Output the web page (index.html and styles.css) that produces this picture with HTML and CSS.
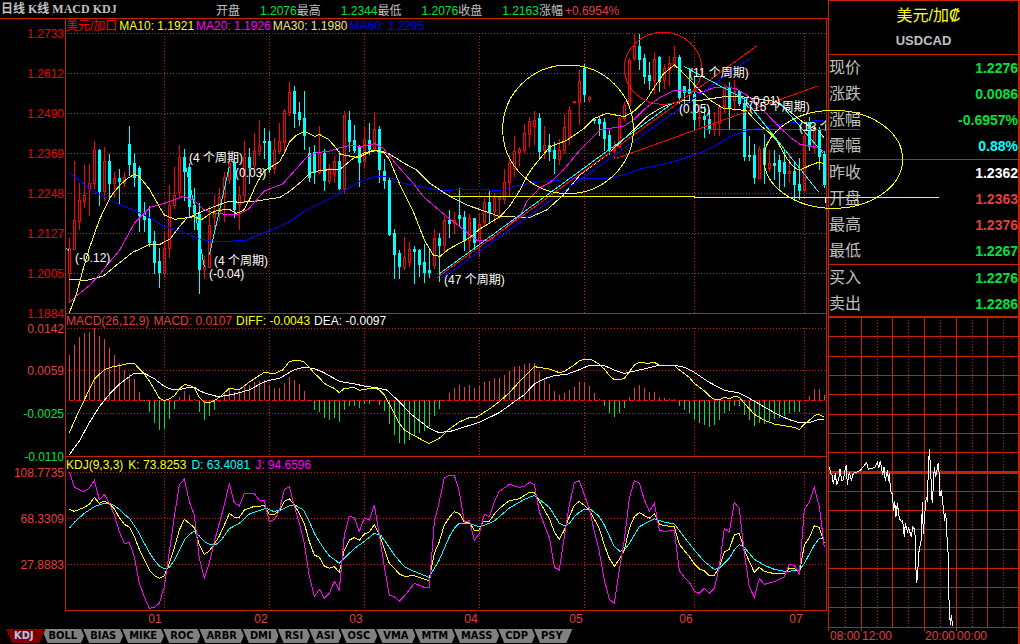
FILE: index.html
```html
<!DOCTYPE html>
<html lang="zh-CN">
<head>
<meta charset="utf-8">
<title>USDCAD 日线</title>
<link rel="stylesheet" href="styles.css">
</head>
<body>
<div class="terminal">
  <main class="main">
    <header class="topbar">
      <h1 class="title">日线 K线 MACD KDJ</h1>
      <dl class="ohlc">
        <div><dt>开盘</dt><dd>1.2076</dd></div>
        <div><dt>最高</dt><dd>1.2344</dd></div>
        <div><dt>最低</dt><dd>1.2076</dd></div>
        <div><dt>收盘</dt><dd>1.2163</dd></div>
        <div class="change"><dt>涨幅</dt><dd>+0.6954%</dd></div>
      </dl>
    </header>

    <section class="panel">
      <svg class="chart" id="price" viewBox="0 18 828 295" role="img" aria-label="K线图">
        <g class="axis axis-price">
          <text x="64" y="38">1.2733</text><text x="64" y="78">1.2612</text>
          <text x="64" y="118">1.2490</text><text x="64" y="158">1.2369</text>
          <text x="64" y="198">1.2248</text><text x="64" y="238">1.2127</text>
          <text x="64" y="278">1.2005</text><text x="64" y="318">1.1884</text>
        </g>
      </svg>
      <p class="legend legend-price"><span class="red">美元/加口</span><span class="yellow">MA10: 1.1921</span><span class="magenta">MA20: 1.1926</span><span class="khaki">MA30: 1.1980</span><span class="blue">MA60: 1.2295</span></p>
    </section>

    <section class="panel">
      <svg class="chart" id="macd" viewBox="0 313 828 143" role="img" aria-label="MACD">
        <g class="axis">
          <text x="64" y="333">0.0142</text><text x="64" y="375">0.0059</text>
          <text x="64" y="418" class="neg">-0.0025</text><text x="64" y="461" class="neg">-0.0110</text>
        </g>
      </svg>
      <p class="legend"><span class="rose">MACD(26,12,9)</span><span class="rose">MACD: 0.0107</span><span class="yellow">DIFF: -0.0043</span><span class="white">DEA: -0.0097</span></p>
    </section>

    <section class="panel">
      <svg class="chart" id="kdj" viewBox="0 456 828 171" role="img" aria-label="KDJ">
        <g class="axis">
          <text x="64" y="477">108.7735</text><text x="64" y="523">68.3309</text><text x="64" y="569">27.8883</text>
        </g>
        <g class="months">
          <text x="155" y="623">01</text><text x="261" y="623">02</text><text x="356" y="623">03</text>
          <text x="471" y="623">04</text><text x="576" y="623">05</text><text x="686" y="623">06</text><text x="796" y="623">07</text>
        </g>
      </svg>
      <p class="legend legend-kdj"><span class="yellow">KDJ(9,3,3)</span><span class="yellow">K: 73.8253</span><span class="cyan">D: 63.4081</span><span class="magenta">J: 94.6596</span></p>
    </section>

    <nav class="tabs">
      <button class="tab active">KDJ</button><button class="tab">BOLL</button><button class="tab">BIAS</button><button class="tab">MIKE</button><button class="tab">ROC</button><button class="tab">ARBR</button><button class="tab">DMI</button><button class="tab">RSI</button><button class="tab">ASI</button><button class="tab">OSC</button><button class="tab">VMA</button><button class="tab">MTM</button><button class="tab">MASS</button><button class="tab">CDP</button><button class="tab">PSY</button>
    </nav>
  </main>

  <aside class="side">
    <div class="quote">
      <div class="symbol"><h2>美元/加₡</h2><p>USDCAD</p></div>
      <dl class="rows">
        <div><dt>现价</dt><dd class="green">1.2276</dd></div>
        <div><dt>涨跌</dt><dd class="green">0.0086</dd></div>
        <div><dt>涨幅</dt><dd class="green">-0.6957%</dd></div>
        <div><dt>震幅</dt><dd class="cyan">0.88%</dd></div>
      </dl>
      <dl class="rows">
        <div><dt>昨收</dt><dd class="white">1.2362</dd></div>
        <div><dt>开盘</dt><dd class="rose">1.2363</dd></div>
        <div><dt>最高</dt><dd class="rose">1.2376</dd></div>
        <div><dt>最低</dt><dd class="green">1.2267</dd></div>
      </dl>
      <dl class="rows">
        <div><dt>买入</dt><dd class="green">1.2276</dd></div>
        <div><dt>卖出</dt><dd class="green">1.2286</dd></div>
      </dl>
    </div>
    <svg class="chart" id="intraday" viewBox="828 317 192 327" role="img" aria-label="分时图">
      <g class="hours">
        <text x="830" y="640">08:00</text><text x="862" y="640">12:00</text>
        <text x="925" y="640">20:00</text><text x="957" y="640">00:00</text>
      </g>
    </svg>
  </aside>
</div>
<script src="chart.js"></script>
</body>
</html>
```

FILE: styles.css
```css
* { box-sizing: border-box; margin: 0; padding: 0; }

body {
  background: #000;
  color: #c0c0c0;
  font: 12px/14px "Liberation Sans", "Noto Sans CJK SC", sans-serif;
}

.terminal {
  display: grid;
  grid-template-columns: minmax(0, 1fr) 192px;
  min-height: 100vh;
  overflow: hidden;
}

/* annotations of the price chart run over the side panel */
.main { position: relative; z-index: 1; pointer-events: none; }
.tabs { pointer-events: auto; }

.topbar { display: flex; align-items: flex-start; height: 18px; white-space: nowrap; }
.title {
  flex: none;
  width: 216px;
  padding: 2px 0 0 1px;
  font: bold 12px/14px "Liberation Serif", "Noto Sans CJK SC", serif;
}
.ohlc { display: flex; padding-top: 4px; }
.ohlc div { display: flex; gap: 20px; }
.ohlc dd { color: #00e040; }
.ohlc .change { gap: 2px; }
.ohlc .change dd { color: #e04040; }

.panel { display: grid; }
.panel > * { grid-area: 1 / 1; }
.legend { display: flex; gap: 4px; padding: 1px 0 0 66px; align-self: start; white-space: nowrap; }
.legend-price { gap: 2px; }
.legend-kdj { gap: 5px; padding-top: 2px; }

.chart { display: block; width: 100%; height: auto; overflow: visible; fill: none; }
.chart text { font-size: 12px; stroke: none; }

.axis text { fill: #e04040; text-anchor: end; }
.axis-price text { fill: #f00000; }
.axis text.neg { fill: #00e040; }
.months text { fill: #e04040; text-anchor: middle; }
.hours text { fill: #e04040; }
.notes text { fill: #fff; }

.frame, .grid, .baseline, .up, .down, .line, .bar-up, .bar-down { shape-rendering: crispEdges; }
.frame { stroke: #c82000; }
.frame-thick { stroke: #c82000; stroke-width: 3; shape-rendering: crispEdges; }
.grid { stroke: #c82000; stroke-dasharray: 1 2; }
.baseline { stroke: #f00; stroke-dasharray: 5 2; }
.up { stroke: #f00; }
.down { stroke: #0ff; }
.down-body { fill: #0ff; shape-rendering: crispEdges; }
.bar-up { stroke: #e04040; }
.bar-down { stroke: #00e040; }
.line { stroke-width: 1; vector-effect: non-scaling-stroke; }

.red { color: #f00; }
.rose { color: #e04040; }
.green { color: #00e040; }
.yellow { color: #ff0; }
.magenta { color: #f0f; }
.khaki { color: #f0e68c; }
.blue { color: #00f; }
.cyan { color: #0ff; }
.white { color: #fff; }

.tabs { display: flex; padding: 2px 0 0 4px; }
.tab {
  position: relative;
  isolation: isolate;
  flex: none;
  height: 14px;
  margin-right: -6px;
  padding: 0 10px 0 9px;
  border: 0;
  background: #000;
  color: #000;
  font: bold 11px/14px "DejaVu Sans Condensed", "DejaVu Sans", sans-serif;
  clip-path: polygon(0 0, 100% 0, calc(100% - 6px) 100%, 6px 100%);
}
.tab::before {
  content: "";
  position: absolute;
  z-index: -1;
  inset: 0 0 0 2px;
  background: #808080;
  clip-path: polygon(0 0, 100% 0, calc(100% - 6px) 100%, 6px 100%);
}
.tab.active { z-index: 1; padding: 0 12px 0 10px; color: #a6caf0; }
.tab.active::before { background: #800000; }

.side { min-width: 0; border-right: 2px solid #c82000; }
.side .chart { width: calc(100% + 2px); }
.quote { border: solid #c82000; border-width: 1px 0 0 1px; }
.symbol { height: 53px; padding-top: 4px; text-align: center; }
.symbol h2 { padding-left: 10px; color: #ff0; font: 16px/22px "Liberation Sans", "Noto Sans CJK SC", sans-serif; }
.symbol p { padding-top: 6px; font: bold 13px/16px "Liberation Sans", sans-serif; }
.rows { border-top: 1px solid #c82000; }
.rows div { display: flex; justify-content: space-between; align-items: center; height: 26px; }
.rows dt { font-size: 16px; line-height: 26px; }
.rows dd { font-size: 14px; font-weight: bold; }
```

FILE: chart.js
```javascript
const NS = "http://www.w3.org/2000/svg";
const X0 = 69, STEP = 5, LEFT = 65, RIGHT = 826;

function add(parent, name, attrs, text) {
  const el = document.createElementNS(NS, name);
  for (const key in attrs) el.setAttribute(key, attrs[key]);
  if (text) el.textContent = text;
  parent.appendChild(el);
  return el;
}
const path = (parent, cls, d, extra) => add(parent, "path", { class: cls, d, ...extra });
const H = (x1, x2, y) => `M${x1} ${y + 0.5}H${x2}`;
const V = (x, y1, y2) => `M${x + 0.5} ${y1}V${y2}`;

const price = document.getElementById("price");
const macd = document.getElementById("macd");
const kdj = document.getElementById("kdj");
const intraday = document.getElementById("intraday");
const monthLines = [164, 269, 364, 479, 584, 694, 804];

/* frames and grids */
function panelGrid(svg, rows, top, bottom) {
  for (const y of rows) path(svg, "grid", H(LEFT + 3, RIGHT, y));
  for (const x of monthLines) path(svg, "grid", V(x, top, bottom));
}
panelGrid(price, [33, 73, 113, 153, 193, 233, 273], 33, 313);
panelGrid(macd, [328, 370, 413], 328, 456);
panelGrid(kdj, [472, 518, 564], 472, 610);
path(price, "frame", H(0, 828, 18) + V(LEFT, 18, 313) + V(RIGHT, 18, 313));
path(macd, "frame", H(LEFT, 827, 313) + V(LEFT, 313, 456) + V(RIGHT, 313, 456));
path(kdj, "frame", H(LEFT, 827, 456) + H(LEFT, 827, 610) + V(LEFT, 456, 610) + V(RIGHT, 456, 610));

/* candles: direction, high, body top, body bottom, low */
const candles = `r 238 248 273 301|r 161 220 249 249|r 183 200 221 229|r 165 195 201 207|r 164 183 188 215|r 141 150 183 188|c 149 150 191 205|r 147 161 191 200|c 154 161 183 198|r 172 178 183 197
c 169 178 181 203|r 172 177 183 186|c 126 144 164 175|c 153 163 177 186|c 166 168 215 231|c 202 213 219 231|c 206 218 242 246|c 231 241 262 273|c 248 261 272 287|r 231 248 273 277
r 185 205 248 257|r 167 195 205 208|r 145 157 192 196|c 149 157 171 200|c 163 167 206 216|c 188 205 213 229|c 203 214 269 293|r 256 266 269 278|r 206 225 267 267|r 195 213 217 228
r 188 197 213 220|r 172 177 196 221|r 159 163 179 183|c 161 162 209 217|r 186 195 204 229|r 141 157 195 202|c 148 157 167 183|r 133 151 165 169|r 120 146 151 155|c 128 141 142 158
c 131 141 169 172|r 138 150 168 173|r 123 141 151 153|r 109 111 142 152|r 82 92 112 115|c 86 91 113 127|c 102 112 119 125|c 91 118 135 149|c 147 153 177 181|c 145 152 172 183
r 126 153 172 173|c 149 153 180 190|r 164 168 181 183|r 156 161 174 182|c 151 161 188 189|r 111 115 188 193|c 111 120 141 151|c 125 140 150 152|c 145 147 162 186|r 126 139 161 167
c 123 140 149 154|r 112 129 148 151|c 126 129 169 182|c 159 171 180 188|c 177 180 234 235|c 229 233 254 278|c 250 253 266 278|r 237 257 267 269|r 242 249 262 266|c 246 249 251 283
c 249 250 264 276|c 244 262 272 282|c 250 270 272 277|r 229 238 265 268|c 233 238 245 281|r 216 220 245 251|c 210 220 223 237|r 212 220 223 233|c 188 215 218 226|c 211 217 240 250
r 214 218 240 257|c 218 218 242 249|r 213 224 240 256|r 198 202 222 225|c 191 202 212 222|r 193 198 211 222|r 197 197 199 218|r 169 182 199 203|r 155 163 182 196|r 136 151 168 176
r 147 149 152 165|r 124 133 150 153|r 117 121 134 146|r 111 120 126 144|c 113 118 151 158|r 126 145 150 158|c 134 145 151 160|c 142 150 158 173|r 139 150 159 164|r 114 127 150 153
r 106 110 136 144|r 101 101 102 103|r 70 81 102 124|c 64 68 94 101|r 96 97 99 101|c 118 119 120 123|c 116 119 123 135|c 118 122 138 150|c 130 135 149 154|r 141 147 150 158
r 117 118 146 147|r 102 105 118 120|r 58 60 105 107|r 34 46 58 60|c 34 46 59 69|c 54 58 76 83|c 62 75 80 89|r 52 59 80 93|c 56 57 81 91|r 64 68 80 88
r 56 63 70 85|r 46 57 64 67|c 55 57 97 103|c 86 86 92 104|c 68 89 93 102|c 77 94 119 129|r 105 117 118 126|c 106 116 119 137|c 110 119 129 133|r 112 124 129 135
r 104 107 123 135|r 84 88 106 112|c 82 88 107 128|r 80 91 100 110|c 90 91 103 105|c 98 103 156 160|c 136 155 156 160|c 144 155 177 183|r 146 149 178 178|c 134 148 164 183
r 150 163 168 171|c 150 163 165 179|c 155 160 171 189|c 150 162 173 186|r 153 171 173 182|c 161 171 184 199|c 158 184 190 199|r 134 136 190 192|c 117 122 146 150|r 127 128 147 152
c 127 130 156 169|c 151 154 184 187`.split(/[|\n]/);
candles.forEach((row, i) => {
  const [dir, ...v] = row.split(" ");
  const [hi, top, bot, lo] = v.map(Number), x = X0 + i * STEP;
  if (dir === "c") {
    path(price, "down", V(x, hi, lo + 1));
    add(price, "rect", { class: "down-body", x: x - 1, y: top, width: 3, height: bot - top + 1 });
  } else {
    path(price, "up", V(x, hi, top) + V(x, bot, lo + 1) + `M${x - 0.5} ${top + 0.5}H${x + 1.5}V${bot + 0.5}H${x - 0.5}Z`);
  }
});

/* curves are stored at a third of a pixel */
const third = (svg, x, y) => add(svg, "g", { transform: `translate(${x} ${y}) scale(${1 / 3})` });
const line = (g, color, points) => add(g, "polyline", { class: "line", stroke: color, points });

const p = third(price, 0, 0);
line(p, "#00f", "208,518 270,567 350,610 400,630 445,650 490,678 540,692 600,718 660,726 740,720 800,695 860,670 920,630 980,600 1020,580 1075,547 1130,528 1170,532 1200,548 1260,560 1320,572 1420,567 1500,572 1560,555 1620,545 1680,540 1720,535 1813,536 1870,525 1920,507 1980,495 2030,482 2080,465 2110,455 2150,435 2190,410 2240,392 2310,378 2360,370 2400,366 2470,360");
line(p, "#f0e68c", "208,838 260,841 310,828 350,795 398,757 445,735 480,733 510,717 540,678 560,655 600,637 650,617 688,604 720,607 770,603 840,592 870,573 900,548 930,520 960,511 1020,508 1060,475 1095,458 1133,451 1165,460 1213,490 1250,510 1290,550 1343,585 1400,615 1450,632 1500,650 1590,652 1640,630 1690,585 1740,525 1820,465 1900,390 1940,350 1980,325 2010,312 2050,302 2110,300 2165,291 2208,288 2240,292 2330,305 2370,335 2400,360 2430,380 2455,390 2473,415");
line(p, "#f0f", "208,908 230,887 270,855 300,822 328,787 358,752 380,712 403,670 430,643 450,622 500,608 550,589 583,602 610,628 643,640 710,645 745,628 793,573 848,552 890,505 920,472 950,458 990,453 1020,443 1055,435 1080,440 1125,431 1150,445 1170,470 1195,500 1240,550 1270,590 1340,650 1380,680 1410,705 1430,720 1470,720 1520,680 1563,645 1580,605 1618,565 1653,545 1690,510 1740,450 1800,390 1873,378 1900,360 1930,330 1980,292 2023,271 2103,277 2140,264 2180,261 2208,266 2240,285 2280,320 2310,352 2340,383 2375,415 2400,433 2440,440 2460,445 2473,457");
line(p, "#ff0", "208,939 230,880 250,805 268,745 298,660 328,597 343,575 363,552 383,535 403,523 418,530 448,567 478,620 493,645 525,658 583,650 605,659 635,638 655,631 688,628 708,640 730,632 748,600 770,550 793,512 838,486 853,460 868,426 890,405 913,394 945,409 958,403 985,418 1003,438 1022,463 1075,473 1120,450 1153,459 1168,478 1198,550 1240,635 1273,720 1300,765 1320,769 1345,748 1393,722 1410,712 1438,688 1500,650 1528,620 1560,570 1580,530 1600,500 1650,440 1698,422 1753,385 1783,355 1820,340 1873,350 1903,333 1940,298 1963,262 1990,222 2023,195 2043,212 2103,275 2133,302 2170,325 2208,328 2240,332 2260,355 2283,378 2310,400 2330,420 2343,445 2360,475 2380,500 2398,511 2428,497 2455,487 2473,490");

/* drawn trend lines and ellipses */
line(p, "#00f", "1325,835 2250,175");
line(p, "#f00", "1312,832 2270,138");
line(p, "#0ff", "1320,820 2020,308");
line(p, "#f00", "1850,475 2453,258");
line(p, "#f00", "2113,387 2580,387");
line(p, "#0ff", "2053,200 2233,297 2455,575");
line(p, "#0ff", "2340,310 2470,460");
line(p, "#0ff", "553,480 583,615 600,730 613,800");
line(p, "#0ff", "628,765 688,500");
line(p, "#0ff", "198,744 208,752");
line(p, "#fff", "2476,592 2476,610");
line(p, "#ff0", "1350,590 2082,590 2082,593 2817,593");
for (const [cx, cy, rx, ry, color] of [[1704, 388, 196, 193, "#ff0"], [1989, 205, 116, 108, "#f00"], [2500, 478, 208, 147, "#ff0"]])
  add(p, "ellipse", { class: "line", stroke: color, cx, cy, rx, ry });

const clip = add(add(price, "defs", {}), "clipPath", { id: "plot" });
add(clip, "rect", { x: LEFT, y: 18, width: RIGHT - LEFT, height: 295 });
const notes = add(price, "g", { class: "notes", "clip-path": "url(#plot)" });
for (const [x, y, t] of [[75, 262, "(-0.12)"], [189, 162, "(4 个周期)"], [235, 177, "(0.03)"], [214, 265, "(4 个周期)"], [209, 278, "(-0.04)"], [444, 284, "(47 个周期)"], [689, 77, "(11 个周期)"], [679, 113, "(0.05)"], [745, 105, "(-0.01)"], [749, 111, "(15 个周期)"], [799, 131, "(13 个"]])
  add(notes, "text", { x, y }, t);

/* MACD histogram, one value per candle */
const BASE = 271;
const bars = "135,105,81,69,66,54,78,87,114,135,159,180,192,207,246,273,306,339,360,357,327,297,261,243,255,268,306,330,318,300,276,250,234,246,243,231,225,216,213,210,225,234,234,219,201,210,222,243,273,300,306,324,330,324,336,300,288,288,294,282,282,271,285,303,342,375,399,402,390,378,369,363,351,318,297,271,249,234,225,231,225,234,228,216,213,204,204,195,183,171,168,162,159,159,186,207,222,243,255,249,240,231,216,219,228,249,266,288,309,321,309,294,261,234,225,234,246,246,261,264,267,268,288,300,309,330,339,345,351,345,330,309,303,288,288,315,330,348,339,342,333,327,324,318,309,306,306,274,258,237,237,255".split(",").map(Number);
bars.forEach((v, i) => {
  const y = 310 + Math.round(v / 3), x = X0 + i * STEP;
  if (v !== BASE) path(macd, v < BASE ? "bar-up" : "bar-down", V(x, y, 400));
});
path(macd, "baseline", H(LEFT + 4, RIGHT, 400));

const m = third(macd, 0, 310);
line(m, "#fff", "208,434 238,393 268,338 298,290 328,253 358,222 388,200 403,190 433,190 448,198 463,206 478,218 493,229 508,236 523,239 543,238 565,232 585,233 600,243 618,250 650,259 670,258 700,253 750,239 793,215 840,204 883,179 913,172 940,175 970,187 1018,214 1070,223 1095,229 1123,232 1160,240 1198,275 1230,310 1288,355 1315,367 1348,365 1438,337 1498,308 1543,275 1573,254 1603,222 1633,206 1663,197 1703,192 1738,179 1768,166 1813,167 1843,180 1873,190 1918,180 1978,166 2023,166 2053,172 2083,187 2128,217 2173,241 2218,249 2248,265 2293,291 2338,316 2368,329 2398,338 2428,338 2455,329 2473,328");
line(m, "#ff0", "208,368 238,300 253,270 283,207 313,179 343,169 358,167 388,160 403,160 418,177 433,192 448,213 463,238 478,264 493,272 508,267 523,257 538,237 553,224 568,226 583,233 598,262 613,277 628,278 643,272 658,262 688,235 718,239 748,216 793,187 823,191 848,180 868,155 883,151 898,151 913,156 928,172 943,190 958,203 973,220 988,229 1003,235 1018,248 1033,235 1063,233 1078,241 1100,237 1123,234 1138,240 1153,255 1168,282 1183,312 1198,340 1213,360 1230,370 1287,401 1318,385 1348,357 1378,336 1408,323 1428,322 1438,316 1468,297 1498,275 1528,248 1558,215 1603,170 1648,177 1678,188 1693,184 1723,165 1738,152 1753,148 1773,148 1798,163 1813,177 1828,197 1843,209 1858,209 1873,205 1888,185 1903,165 1918,157 1943,160 1963,157 1978,165 2023,166 2038,180 2068,202 2083,220 2113,243 2128,258 2143,268 2158,269 2173,262 2188,266 2203,259 2218,262 2233,280 2263,313 2293,331 2323,342 2383,352 2398,359 2413,342 2428,331 2443,317 2455,313 2473,321");

const k = third(kdj, 0, 450);
line(k, "#0ff", "208,235 223,217 253,190 283,170 313,160 328,160 343,167 358,178 373,193 388,205 403,227 418,250 433,280 448,307 463,330 478,348 493,356 508,352 523,331 538,300 553,270 568,253 583,244 598,258 613,275 628,283 650,282 665,268 688,236 718,220 748,192 778,182 798,175 820,184 838,182 868,167 888,167 910,180 928,215 943,250 958,275 973,298 988,318 1003,328 1018,340 1033,325 1048,310 1063,296 1093,274 1123,250 1143,257 1163,285 1183,315 1213,350 1230,359 1287,382 1318,330 1348,260 1363,235 1378,220 1408,220 1438,230 1453,226 1483,213 1528,174 1573,148 1603,136 1618,148 1648,172 1663,196 1678,220 1693,227 1708,220 1723,200 1738,187 1753,178 1773,179 1798,200 1813,225 1828,258 1843,290 1860,304 1873,300 1888,280 1918,230 1963,206 1993,216 2023,222 2053,262 2083,300 2113,335 2143,358 2158,355 2188,325 2203,300 2218,284 2233,292 2263,328 2293,346 2323,358 2358,365 2398,360 2413,340 2443,285 2458,265 2473,267");
line(k, "#ff0", "208,178 223,184 253,172 268,163 283,142 298,160 313,153 328,161 343,177 358,203 373,223 388,231 403,260 418,298 433,330 448,360 463,377 478,385 493,377 508,340 523,293 538,240 553,208 568,220 583,233 598,285 613,313 628,303 643,282 658,258 673,225 688,190 703,201 718,202 733,180 763,169 778,169 793,166 808,193 823,193 838,182 853,154 868,146 883,165 898,190 913,220 928,275 943,315 958,322 973,348 988,355 1003,350 1018,367 1033,300 1048,270 1063,263 1078,271 1093,252 1108,246 1123,224 1138,253 1153,298 1168,340 1183,355 1198,372 1213,379 1243,377 1287,392 1303,310 1318,275 1333,225 1348,202 1363,185 1378,190 1393,217 1408,217 1423,241 1438,240 1450,214 1468,214 1483,192 1498,175 1528,152 1558,146 1588,127 1603,127 1618,154 1648,205 1663,246 1678,268 1693,240 1708,200 1723,166 1738,154 1768,179 1783,208 1798,235 1813,285 1828,325 1843,349 1858,328 1873,300 1888,235 1903,200 1918,188 1948,205 1963,191 1978,222 1993,227 2023,230 2038,283 2068,320 2083,342 2098,357 2113,362 2128,377 2143,376 2158,350 2173,305 2188,298 2203,254 2218,250 2233,300 2248,335 2263,367 2278,352 2293,364 2323,371 2353,371 2368,355 2383,355 2398,370 2413,285 2428,263 2443,227 2458,233 2473,278");
line(k, "#f0f", "208,67 223,112 250,125 268,114 283,91 298,149 313,133 328,160 343,195 358,245 373,280 388,278 403,320 418,400 433,440 448,475 463,472 478,460 493,410 508,305 523,200 538,105 553,88 568,155 583,195 598,325 613,385 628,340 643,275 658,220 673,165 688,100 703,158 718,168 733,130 763,131 778,151 793,152 808,216 823,208 838,182 853,118 868,110 883,168 898,220 913,280 928,380 943,440 958,418 973,445 988,430 1003,394 1018,420 1033,255 1048,198 1063,203 1078,244 1093,204 1108,210 1123,164 1138,255 1153,350 1168,435 1183,440 1198,454 1213,438 1230,417 1243,400 1273,412 1288,412 1303,215 1318,155 1333,83 1348,76 1363,76 1378,125 1393,217 1408,212 1423,271 1438,250 1453,193 1468,200 1483,155 1498,125 1528,103 1558,112 1573,109 1588,97 1603,104 1618,185 1633,225 1648,262 1663,352 1678,360 1693,260 1708,165 1723,98 1738,92 1753,135 1768,175 1783,245 1798,305 1813,390 1828,448 1843,460 1858,360 1873,270 1888,145 1903,92 1918,99 1933,150 1948,184 1963,160 1978,240 1993,244 2023,241 2038,362 2053,382 2068,397 2083,424 2098,430 2113,415 2128,430 2143,415 2158,350 2173,235 2188,246 2203,157 2218,176 2233,310 2248,410 2263,442 2278,385 2293,403 2323,395 2353,380 2368,343 2383,346 2398,372 2413,177 2428,157 2443,112 2458,170 2473,292");

/* intraday chart */
for (const x of [861, 892, 924, 956, 987]) path(intraday, "frame", V(x, 317, x === 861 || x === 924 || x === 956 ? 631 : 627));
for (const x of [845, 877, 908, 940, 972, 1003]) path(intraday, "grid", V(x, 320, 627));
for (const y of [336, 356, 375, 394, 414, 433, 452, 491, 510, 529, 549, 568, 587, 607, 627]) path(intraday, "frame", H(828, 1019, y));
path(intraday, "frame", V(828, 317, 631) + H(828, 1019, 316) + H(828, 1019, 317));
path(intraday, "frame-thick", H(828, 1019, 472));
line(third(intraday, 820, 310), "#fff", "28,472 32,490 36,495 40,522 46,490 50,526 56,508 60,478 65,512 70,510 77,470 79,468 82,524 88,485 94,512 100,490 120,482 130,470 140,458 145,478 165,472 172,458 176,474 181,452 184,470 188,496 192,472 196,512 202,480 206,512 208,490 212,545 217,552 221,604 224,572 228,620 232,580 238,625 244,635 248,632 253,680 256,640 262,665 266,655 274,680 278,652 284,658 286,690 287,760 290,818 293,795 296,730 304,688 307,577 310,672 314,615 319,560 322,575 325,478 328,418 332,480 335,560 337,580 343,470 347,500 355,458 358,500 360,558 364,540 368,575 374,632 376,608 380,640 381,680 385,740 386,838 388,900 391,944 394,916 398,948");
```
